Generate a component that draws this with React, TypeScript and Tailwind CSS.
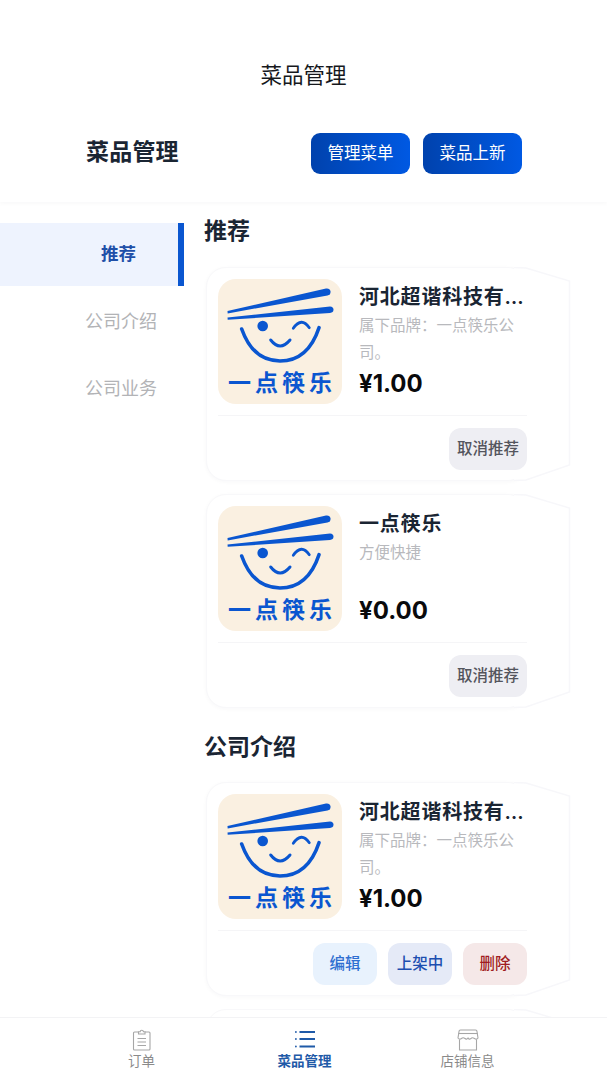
import React from "react";

const FONT = "font-['Inter','Noto_Sans_CJK_SC',sans-serif]";

function Logo() {
  return (
    <div className="w-[124px] h-[125px] shrink-0 rounded-[18px] bg-[#faf0e1] overflow-hidden">
      <svg viewBox="0 0 124 125" width="124" height="125">
        <path d="M9.5 32 L108 9.5 Q111.8 9 112.5 12.2 Q113 15.8 109.5 16.6 L9.7 34.4 Z" fill="#0a56d0" />
        <path d="M9.5 38.6 L112 27.5 Q115.5 27.8 115.5 30.8 Q115.5 33.6 112 34 L9.7 40.8 Z" fill="#0a56d0" />
        <circle cx="44.7" cy="47" r="5.3" fill="#0a56d0" />
        <path d="M75.3 49.3 Q83.5 37.5 91.3 48.7" fill="none" stroke="#0a56d0" strokeWidth="2.8" strokeLinecap="round" />
        <path d="M52.7 61 Q62 73 72 61" fill="none" stroke="#0a56d0" strokeWidth="3" strokeLinecap="round" />
        <path d="M23.7 50 Q35 82 62 82 Q90 82 101 48.7" fill="none" stroke="#0a56d0" strokeWidth="3.6" strokeLinecap="round" />
        <text x="10" y="112" fontSize="23" fontWeight="700" fill="#0a56d0" letterSpacing="4" fontFamily="'Noto Sans CJK SC',sans-serif">一点筷乐</text>
      </svg>
    </div>
  );
}

type Btn = { label: string; cls: string };

function Wedge() {
  return (
    <svg className="absolute left-[299px] top-[-1px]" width="66" height="214" viewBox="0 0 66 214" fill="none">
      <path d="M8 0.5 L20 1 L63.5 14 V198 L20 213 L8 213.5" stroke="#f7f7fa" strokeWidth="1.5" fill="#fff" />
    </svg>
  );
}

function Card({ title, desc, price, buttons }: { title: string; desc: string; price: string; buttons: Btn[] }) {
  return (
    <div className="relative h-[214px] w-[322px] ml-[2px] rounded-[20px] bg-white px-[11px] pt-[11px] shadow-[0_1px_4px_rgba(20,30,60,0.03)] border border-[#f8f8fa]">
      <Wedge />
      <div className="relative flex gap-[17px]">
        <Logo />
        <div className="w-[168px] h-[125px] flex flex-col">
          <div className="mt-[3px] h-[30px] leading-[30px] text-[20px] font-semibold tracking-[0.8px] text-[#1a2533] truncate whitespace-nowrap">{title}</div>
          <div className="h-[54px] text-[15.5px] leading-[27px] text-[#b8b9bd]">{desc}</div>
          <div className="mt-[3px] h-[30px] leading-[30px] text-[24px] font-bold text-[#0a0a0c]">{price}</div>
        </div>
      </div>
      <div className="relative mt-[11px] w-[309px] border-t border-[#f5f5f7] pt-3 flex justify-end gap-[11px]">
        {buttons.map((b) => (
          <div key={b.label} className={"h-[42px] pb-[1px] rounded-[12px] flex items-center justify-center text-[15.5px] font-medium " + b.cls}>
            {b.label}
          </div>
        ))}
      </div>
    </div>
  );
}

const cancel: Btn[] = [{ label: "取消推荐", cls: "w-[78px] bg-[#eeeef3] text-[#54555d]" }];
const manage: Btn[] = [
  { label: "编辑", cls: "w-[64px] bg-[#e8f2fd] text-[#2f6fd1]" },
  { label: "上架中", cls: "w-[64px] bg-[#e5eaf7] text-[#1d4fb0]" },
  { label: "删除", cls: "w-[64px] bg-[#f5e8e8] text-[#a01c22]" },
];

function ClipboardIcon() {
  return (
    <svg width="20" height="22" viewBox="0 0 20 22" fill="none" stroke="#a6a6a6" strokeWidth="1.1">
      <path d="M6.5 3 H2.5 A1 1 0 0 0 1.5 4 V20 A1 1 0 0 0 2.5 21 H17 A1 1 0 0 0 18 20 V4 A1 1 0 0 0 17 3 H13" />
      <path d="M6.5 5 V2.8 H8.2 A1.6 1.6 0 0 1 11.4 2.8 H13 V5 Z" />
      <path d="M5.5 9.5 H14 M5.5 13 H14 M5.5 16.5 H14" />
    </svg>
  );
}

function ListIcon() {
  return (
    <svg width="20" height="20" viewBox="0 0 20 20" fill="none" stroke="#1f5aa8" strokeWidth="1.8">
      <path d="M4.5 2 H20 M4.5 9 H20 M4.5 16.5 H20" />
      <circle cx="0.9" cy="2" r="0.9" fill="#1f5aa8" stroke="none" />
      <circle cx="0.9" cy="9" r="0.9" fill="#1f5aa8" stroke="none" />
      <circle cx="0.9" cy="16.5" r="0.9" fill="#1f5aa8" stroke="none" />
    </svg>
  );
}

function StoreIcon() {
  return (
    <svg width="22" height="22" viewBox="0 0 22 22" fill="none" stroke="#a6a6a6" strokeWidth="1.1">
      <path d="M3.5 1 H18.5 A1.5 1.5 0 0 1 20 2.5 L21 9 Q19.5 11 17.5 9.5 Q15 8 14 9.5 Q12 11 11 9 Q9.5 11 8 9.5 Q6 8 4.5 9.5 Q2.5 11 1 9 L2 2.5 A1.5 1.5 0 0 1 3.5 1 Z" />
      <path d="M1.4 4.5 H20.6" />
      <path d="M2.5 10.5 V21 H19.5 V10.5" />
    </svg>
  );
}

function NavItem({ icon, label, active }: { icon: React.ReactNode; label: string; active?: boolean }) {
  return (
    <div className="flex-1 flex flex-col items-center">
      <div className="h-[24px] flex items-center">{icon}</div>
      <div className={"mt-[-1px] text-[13.5px] leading-[20px] " + (active ? "font-bold text-[#1f5aa8]" : "text-[#8a8a8a]")}>{label}</div>
    </div>
  );
}

export default function App() {
  const t1 = "河北超谐科技有限公司";
  const d1 = "属下品牌\uFF1A一点筷乐公司。";
  return (
    <div className={"w-[607px] h-[1080px] bg-white flex flex-col overflow-hidden " + FONT}>
      <header className="h-[202px] shrink-0 bg-white shadow-[0_1px_5px_rgba(20,30,60,0.04)] relative z-10">
        <div className="pt-[60px] h-[90px] text-center text-[21.5px] leading-[30px] text-[#16181d]">菜品管理</div>
        <div className="mt-[43px] pl-[86px] pr-[85px] flex items-center justify-between">
          <div className="pb-[3px] text-[23px] font-semibold text-[#1a2533] tracking-[0.2px]">菜品管理</div>
          <div className="flex gap-[13px]">
            <div className="w-[99px] h-[41px] pb-[1px] rounded-[9px] bg-gradient-to-r from-[#0042ad] to-[#0059e3] text-white text-[16.5px] flex items-center justify-center">管理菜单</div>
            <div className="w-[99px] h-[41px] pb-[1px] rounded-[9px] bg-gradient-to-r from-[#0042ad] to-[#0059e3] text-white text-[16.5px] flex items-center justify-center">菜品上新</div>
          </div>
        </div>
      </header>

      <div className="flex-1 min-h-0 flex overflow-hidden">
        <aside className="w-[184px] shrink-0 pt-[21px] flex flex-col gap-1">
          <div className="h-[63px] pb-[1px] bg-[#eef3fe] border-r-[6px] border-[#0a56d0] flex items-center pl-[101px] text-[17.5px] font-bold text-[#1f4fa8]">推荐</div>
          <div className="h-[63px] flex items-center pl-[85px] text-[18px] text-[#b2b3b6]">公司介绍</div>
          <div className="h-[63px] flex items-center pl-[85px] text-[18px] text-[#b2b3b6]">公司业务</div>
        </aside>
        <main className="flex-1 min-w-0 pl-[20px] pt-[13px]">
          <h2 className="h-[32px] leading-[32px] text-[23px] font-semibold text-[#1a2533] mb-5">推荐</h2>
          <div className="flex flex-col gap-[13px]">
            <Card title={t1} desc={d1} price="¥1.00" buttons={cancel} />
            <Card title="一点筷乐" desc="方便快捷" price="¥0.00" buttons={cancel} />
          </div>
          <h2 className="mt-[23px] h-[32px] leading-[32px] text-[23px] font-semibold text-[#1a2533] mb-[19px]">公司介绍</h2>
          <div className="flex flex-col gap-[13px]">
            <Card title={t1} desc={d1} price="¥1.00" buttons={manage} />
            <div className="relative h-[214px] w-[322px] ml-[2px] rounded-[20px] bg-white border border-[#f8f8fa]">
              <Wedge />
            </div>
          </div>
        </main>
      </div>

      <nav className="h-[63px] shrink-0 bg-white border-t border-[#f3f3f5] flex pt-[10px] pl-[60px] pr-[58px] relative z-10">
        <NavItem icon={<ClipboardIcon />} label="订单" />
        <NavItem icon={<ListIcon />} label="菜品管理" active />
        <NavItem icon={<StoreIcon />} label="店铺信息" />
      </nav>
    </div>
  );
}
